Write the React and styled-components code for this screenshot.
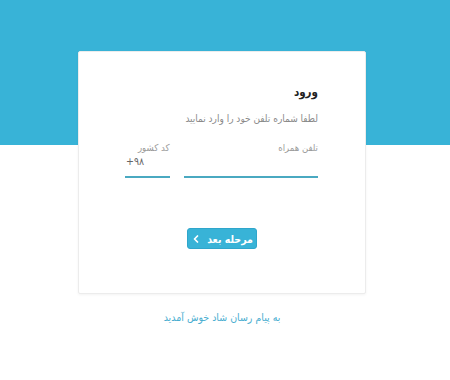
import React from "react";
import styled, { createGlobalStyle } from "styled-components";
import { ChevronLeft } from "lucide-react";

const GlobalStyle = createGlobalStyle`
  html, body {
    margin: 0;
    padding: 0;
    background: #fff;
  }
  body {
    font-family: "DejaVu Sans Condensed", "DejaVu Sans", sans-serif;
  }
`;

function App() {
  return (
    <Page>
      <GlobalStyle />
      <Card>
        <Title>ورود</Title>
        <Hint>لطفا شماره تلفن خود را وارد نمایید</Hint>
        <Fields>
          <Field width={136}>
            <Label>تلفن همراه</Label>
            <Input />
          </Field>
          <Field width={45}>
            <Label>کد کشور</Label>
            <Input as="div" ltr>+۹۸</Input>
          </Field>
        </Fields>
        <Actions>
          <NextButton>
            مرحله بعد
            <ChevronLeft size={12} strokeWidth={3.5} />
          </NextButton>
        </Actions>
      </Card>
      <Welcome>به پیام رسان شاد خوش آمدید</Welcome>
    </Page>
  );
}

const Page = styled.div`
  direction: rtl;
  min-height: 380px;
  padding: 51px 6px 0 0;
  box-sizing: border-box;
  background: linear-gradient(to bottom, #38b3d7 0, #38b3d7 145px, #fff 145px);
`;

const Card = styled.div`
  width: 288px;
  height: 243px;
  margin: 0 auto;
  box-sizing: border-box;
  padding: 31px 47px 0 46px;
  background: #fff;
  border: 1px solid #ececec;
  border-radius: 2px;
  box-shadow: 0 1px 3px rgba(0, 0, 0, 0.05);
`;

const Title = styled.div`
  font-size: 11.5px;
  font-weight: bold;
  color: #222;
  line-height: 18px;
`;

const Hint = styled.div`
  margin-top: 10px;
  font-size: 10px;
  color: #8a8a8a;
  line-height: 16px;
`;

const Fields = styled.div`
  display: flex;
  gap: 14px;
  margin-top: 14px;
`;

const Field = styled.div`
  width: ${(p) => p.width}px;
  display: flex;
  flex-direction: column;
`;

const Label = styled.div`
  font-size: 9.5px;
  color: #9a9a9a;
  line-height: 14px;
`;

const Input = styled.input`
  display: block;
  width: 100%;
  height: 23px;
  box-sizing: border-box;
  margin: 0;
  padding: 0 0 0 1px;
  border: none;
  border-bottom: 2px solid #4aa9c1;
  outline: none;
  background: transparent;
  font-family: inherit;
  font-size: 10.5px;
  color: #666;
  line-height: 13px;
  direction: ${(p) => (p.ltr ? "ltr" : "rtl")};
  text-align: left;
`;

const Actions = styled.div`
  display: flex;
  justify-content: center;
  margin-top: 50px;
`;

const NextButton = styled.button`
  display: flex;
  align-items: center;
  justify-content: center;
  gap: 5px;
  width: 70px;
  height: 21px;
  padding: 0;
  border: 1px solid #2fa6cb;
  border-radius: 3px;
  background: #38b3d7;
  color: #fff;
  font-family: inherit;
  font-size: 10.5px;
  font-weight: bold;
  direction: rtl;
`;

const Welcome = styled.div`
  margin-top: 15px;
  text-align: center;
  font-size: 10.5px;
  color: #4aaed0;
  line-height: 16px;
`;

export default App;
